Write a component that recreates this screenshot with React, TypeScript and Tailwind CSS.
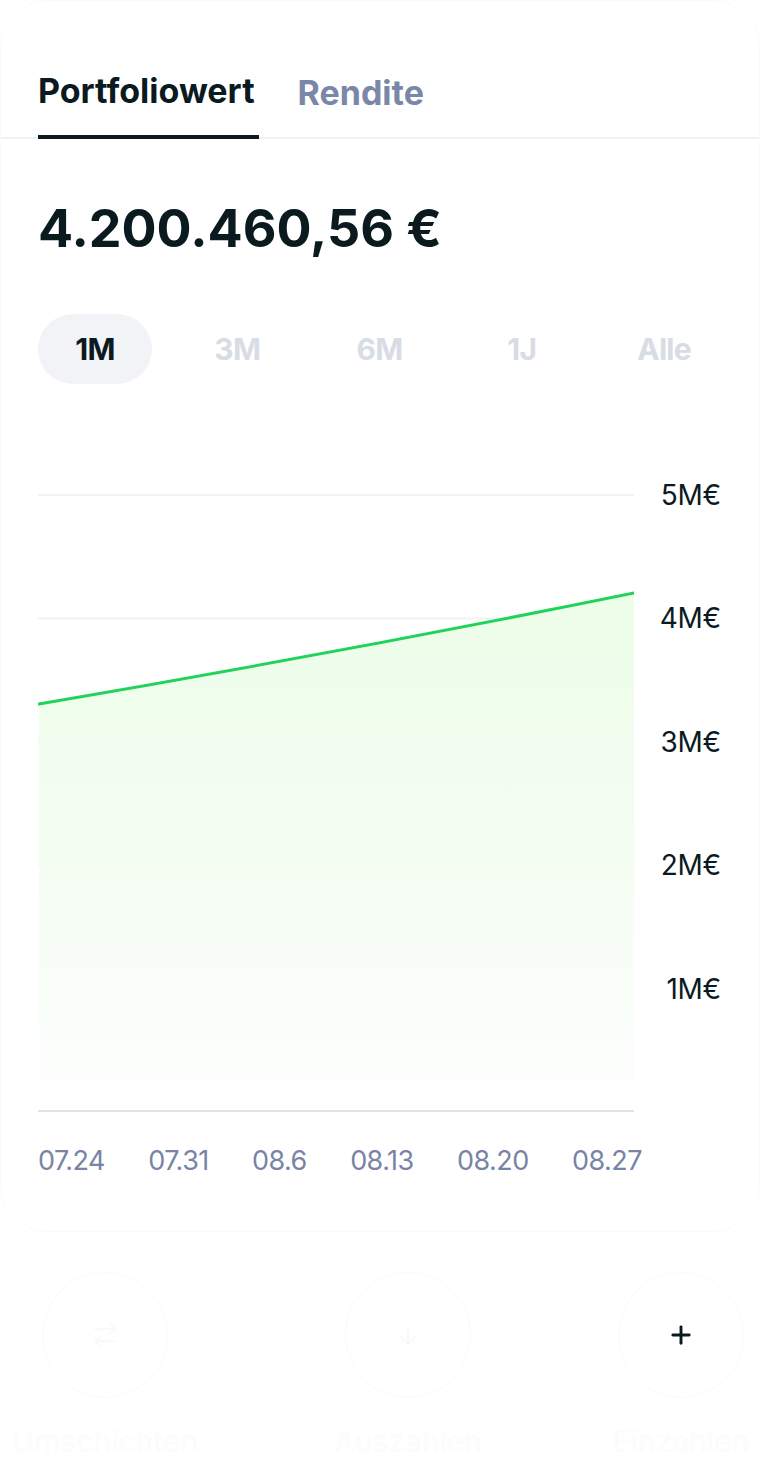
import React from 'react';
import { ArrowRightLeft, ArrowDown, Plus } from 'lucide-react';

const periods = ['1M', '3M', '6M', '1J', 'Alle'];
const yLabels = ['5M€', '4M€', '3M€', '2M€', '1M€'];
const xLabels = ['07.24', '07.31', '08.6', '08.13', '08.20', '08.27'];
const gridY = [62, 185.5, 309, 432.5, 556];

function Chart() {
  return (
    <div className="mt-[49px] flex">
      <div className="w-[596px] shrink-0">
        <svg width="596" height="679" viewBox="0 0 596 679" fill="none" xmlns="http://www.w3.org/2000/svg">
          <defs>
            <linearGradient id="area" x1="0" y1="160" x2="0" y2="650" gradientUnits="userSpaceOnUse">
              <stop offset="0" stopColor="#ecfde8" />
              <stop offset="1" stopColor="#fcfefc" />
            </linearGradient>
          </defs>
          {gridY.map((y) => (
            <line key={y} x1="0" x2="596" y1={y} y2={y} stroke="#f1f2f6" strokeWidth="2" />
          ))}
          <path d="M1 271 Q 300 220 596 160 L596 644 Q596 648 592 648 L5 648 Q1 648 1 644 Z" fill="url(#area)" />
          <path d="M1 271 Q 300 220 596 160" stroke="#22d35b" strokeWidth="3" strokeLinecap="round" />
          <line x1="0" x2="596" y1="678" y2="678" stroke="#dfe2eb" strokeWidth="2" />
        </svg>
      </div>
      <div className="flex w-[87px] flex-col">
        {yLabels.map((l) => (
          <div key={l} className="flex h-[123.5px] items-center justify-end text-[28px] leading-none tracking-[-0.01em] text-[#0b1a1f]">
            {l}
          </div>
        ))}
      </div>
    </div>
  );
}

function Action({ label, icon, ml }: { label: string; icon: React.ReactNode; ml: string }) {
  return (
    <div className={`flex w-[200px] shrink-0 flex-col items-center ${ml}`}>
      <div className="flex h-[126px] w-[126px] items-center justify-center rounded-full border border-[#fafafb]">
        {icon}
      </div>
      <span className="mt-[25px] whitespace-nowrap text-[30px] leading-[36px] text-[#fcfcfd]">{label}</span>
    </div>
  );
}

export default function App() {
  return (
    <div className="min-h-[1467px] overflow-hidden bg-white font-['Inter',sans-serif]">
      <div className="h-[1232px] rounded-[48px] border border-[#fafafb] bg-white">
        <div className="flex gap-[39px] border-b-2 border-[#eff1f5] pl-[37px] pt-[68px]">
          <button className="-mb-[2px] border-b-4 border-[#0b1a1f] pb-[22px] pr-[4px] text-[34px] font-bold leading-[44px] text-[#0b1a1f]">
            Portfoliowert
          </button>
          <button className="-mb-[2px] pb-[22px] text-[34px] font-bold leading-[44px] text-[#7a87a8]">
            Rendite
          </button>
        </div>

        <div className="px-[37px]">
          <h1 className="mt-[60px] text-[52px] font-bold leading-[60px] text-[#0b1a1f]">
            4.200.460,56 €
          </h1>

          <div className="mt-[55px] flex w-[683px] justify-between">
            {periods.map((p, i) => (
              <div
                key={p}
                className={
                  i === 0
                    ? 'flex h-[70px] w-[114px] items-center justify-center rounded-full bg-[#f2f3f7] text-[30px] font-bold tracking-tight text-[#0b1a1f]'
                    : 'flex h-[70px] w-[114px] items-center justify-center rounded-full text-[30px] font-bold tracking-tight text-[#d8dce5]'
                }
              >
                {p}
              </div>
            ))}
          </div>

          <Chart />

          <div className="mt-[34px] flex w-[604px] justify-between">
            {xLabels.map((l) => (
              <span key={l} className="text-[27px] leading-[30px] tracking-[-0.02em] text-[#7884a5]">
                {l}
              </span>
            ))}
          </div>
        </div>
      </div>

      <div className="mt-[40px] flex w-full overflow-hidden">
        <Action label="Umschichten" ml="ml-[5px]" icon={<ArrowRightLeft size={30} strokeWidth={1.5} color="#f9f9fa" />} />
        <Action label="Auszahlen" ml="ml-[103px]" icon={<ArrowDown size={30} strokeWidth={1.5} color="#f9f9fa" />} />
        <Action label="Einzahlen" ml="ml-[73px]" icon={<Plus size={28} strokeWidth={2.5} color="#0b1a1f" />} />
      </div>
    </div>
  );
}
